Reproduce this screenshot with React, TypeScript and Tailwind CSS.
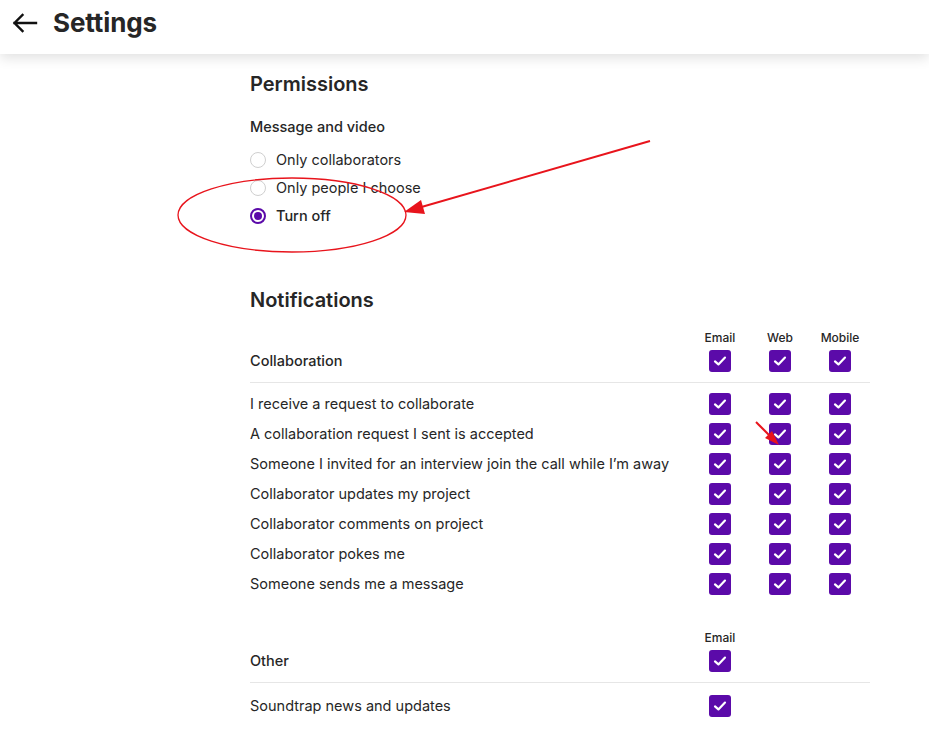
import React from "react";

const PURPLE = "bg-[#5b0aa9]";

function Check() {
  return (
    <div className={`w-[22px] h-[22px] rounded-[3px] ${PURPLE} flex items-center justify-center`}>
      <svg width="16" height="16" viewBox="0 0 16 16" fill="none">
        <path d="M3 8.4 L6.4 11.4 L13 4.6" stroke="white" strokeWidth="2.2" strokeLinecap="round" strokeLinejoin="round" />
      </svg>
    </div>
  );
}

function Radio({ checked }: { checked?: boolean }) {
  if (checked) {
    return (
      <div className="w-4 h-4 rounded-full border-2 border-[#5b0aa9] flex items-center justify-center">
        <div className="w-2 h-2 rounded-full bg-[#5b0aa9]" />
      </div>
    );
  }
  return <div className="w-4 h-4 rounded-full border border-[#cfcfcf] bg-white" />;
}

const rows = [
  "I receive a request to collaborate",
  "A collaboration request I sent is accepted",
  "Someone I invited for an interview join the call while I\u2019m away",
  "Collaborator updates my project",
  "Collaborator comments on project",
  "Collaborator pokes me",
  "Someone sends me a message",
];

export default function App() {
  return (
    <div className="relative w-[929px] h-[730px] overflow-hidden bg-white text-[#262626]" style={{ fontFamily: "Inter, 'Noto Sans', sans-serif" }}>
      <header className="relative z-10 h-[54px] flex items-center pl-[12px] bg-white shadow-[0_4px_12px_rgba(0,0,0,0.12)] pb-[10px]">
        <svg width="26" height="20" viewBox="0 0 26 20" fill="none" className="mt-[2px]">
          <path d="M24 10 H2.5 M10.5 2 L2.5 10 L10.5 18" stroke="#111" strokeWidth="2.4" strokeLinecap="square" />
        </svg>
        <h1 className="ml-[15px] text-[26px] font-bold tracking-[-0.1px]">Settings</h1>
      </header>

      <main className="pl-[250px] w-[870px]">
        <h2 className="mt-[17px] text-[20px] font-semibold leading-[26px]">Permissions</h2>
        <div className="mt-[20px] text-[14.5px] font-medium leading-[20px]">Message and video</div>
        <div className="mt-[9px] flex flex-col text-[14.5px] leading-[28px]">
          <label className="flex items-center gap-[10px]"><Radio /><span>Only collaborators</span></label>
          <label className="flex items-center gap-[10px]"><Radio /><span>Only people I choose</span></label>
          <label className="flex items-center gap-[10px]"><Radio checked /><span className="font-medium">Turn off</span></label>
        </div>

        <h2 className="mt-[57px] text-[20px] font-semibold leading-[26px]">Notifications</h2>

        <div className="mt-[17px] flex items-end">
          <div className="flex-1 text-[14.5px] font-medium leading-[22px]">Collaboration</div>
          {["Email", "Web", "Mobile"].map((h) => (
            <div key={h} className="w-[60px] flex flex-col items-center">
              <div className="text-[12px] font-medium leading-[16px] mb-[4px]">{h}</div>
              <Check />
            </div>
          ))}
        </div>
        <div className="mt-[10px] h-px bg-[#e6e6e6]" />
        <div className="mt-[6px] flex flex-col">
          {rows.map((r) => (
            <div key={r} className="h-[30px] flex items-center">
              <div className="flex-1 text-[14.5px] leading-[20px]">{r}</div>
              <div className="w-[60px] flex justify-center"><Check /></div>
              <div className="w-[60px] flex justify-center"><Check /></div>
              <div className="w-[60px] flex justify-center"><Check /></div>
            </div>
          ))}
        </div>

        <div className="mt-[31px] flex items-end">
          <div className="flex-1 text-[14.5px] font-medium leading-[22px]">Other</div>
          <div className="w-[60px] flex flex-col items-center">
            <div className="text-[12px] font-medium leading-[16px] mb-[4px]">Email</div>
            <Check />
          </div>
          <div className="w-[120px]" />
        </div>
        <div className="mt-[10px] h-px bg-[#e6e6e6]" />
        <div className="mt-[12px] h-[22px] flex items-center">
          <div className="flex-1 text-[14.5px] leading-[20px]">Soundtrap news and updates</div>
          <div className="w-[60px] flex justify-center"><Check /></div>
          <div className="w-[120px]" />
        </div>
      </main>

      <svg className="absolute left-0 top-0 pointer-events-none z-20" width="929" height="730" viewBox="0 0 929 730">
        <ellipse cx="292" cy="215" rx="114" ry="37" fill="none" stroke="#e8141c" strokeWidth="1.3" />
        <line x1="650" y1="141" x2="418" y2="208" stroke="#e8141c" strokeWidth="2" />
        <polygon points="404,212 421,200 425,214" fill="#e8141c" />
        <line x1="756" y1="422" x2="771" y2="437" stroke="#e8141c" strokeWidth="2" />
        <polygon points="779,445 765,438 772,431" fill="#e8141c" />
      </svg>
    </div>
  );
}
